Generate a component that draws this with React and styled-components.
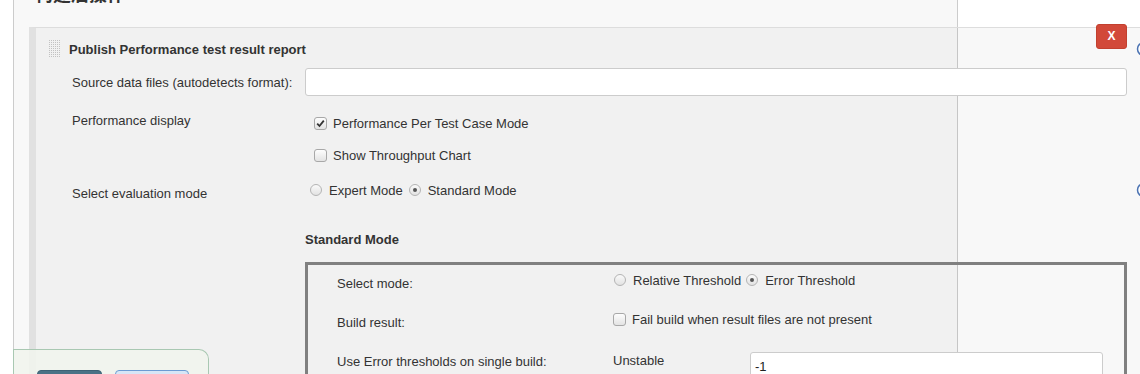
import React from 'react';
import styled, { createGlobalStyle } from 'styled-components';

const GlobalStyle = createGlobalStyle`
  html, body {
    margin: 0;
    padding: 0;
    overflow: hidden;
    background: #fff;
  }
  body {
    font-family: "Liberation Sans", Arial, "Noto Sans CJK SC", sans-serif;
    font-size: 13px;
    color: #333;
  }
`;

const Section = styled.div`
  margin-left: 13px;
  width: 943px;
  min-height: 100vh;
  border-left: 1px solid #ccc;
  border-right: 1px solid #ccc;
  background: #f8f8f8;
`;

const SectionTitle = styled.h2`
  margin: -19px 0 0 21px;
  height: 24px;
  font-family: "Noto Sans CJK SC", sans-serif;
  font-size: 18px;
  line-height: 24px;
  font-weight: bold;
  color: #333;
`;

const Panel = styled.div`
  position: relative;
  margin: 22px 0 0 15px;
  width: 1116px;
  padding-bottom: 40px;
  border-top: 1px solid #ddd;
  border-left: 7px solid #e1e1e1;
  background: rgba(0, 0, 0, 0.027);
`;

const Header = styled.div`
  display: grid;
  grid-template-columns: 1078px 25px;
  align-items: center;
  padding: 12px 0 10px 13px;
`;

const HeaderTitle = styled.div`
  display: flex;
  align-items: center;
  gap: 8px;
  font-weight: bold;
  line-height: 15px;
`;

const DeleteButton = styled.button`
  position: absolute;
  top: -4px;
  left: 1060px;
  width: 31px;
  height: 25px;
  padding: 0;
  border: 1px solid #c2402f;
  border-radius: 3px;
  background: #d24939;
  color: #fff;
  font-family: "Liberation Sans", Arial, sans-serif;
  font-size: 12px;
  font-weight: bold;
  line-height: 23px;
`;

const Row = styled.div`
  display: grid;
  grid-template-columns: 233px 822px 25px;
  align-items: ${p => p.$align || 'start'};
  padding-left: 36px;
  margin-top: ${p => p.$mt || 0}px;
`;

const Label = styled.div`
  padding-top: ${p => p.$offset || 0}px;
  line-height: 15px;
`;

const TextInput = styled.input`
  box-sizing: border-box;
  width: ${p => p.$width || '100%'};
  height: 28px;
  padding: 0 4px;
  border: 1px solid #ccc;
  border-radius: 3px;
  background: #fff;
  font-family: "Liberation Sans", Arial, sans-serif;
  font-size: 13px;
  color: #222;
  outline: none;
`;

const Options = styled.div`
  display: flex;
  flex-direction: column;
  gap: 12px;
`;

const OptionLine = styled.label`
  display: flex;
  align-items: center;
  height: 20px;
  gap: ${p => p.$gap || 0}px;
`;

const Choice = styled.span`
  display: inline-flex;
  align-items: center;
  line-height: 15px;
`;

const CheckBox = styled.span`
  box-sizing: border-box;
  display: inline-flex;
  align-items: center;
  justify-content: center;
  width: 13px;
  height: 13px;
  margin: 0 6px 0 ${p => p.$ml}px;
  border: 1px solid #a8a8a8;
  border-radius: 3px;
  background: linear-gradient(#fdfdfd, #e3e3e3);
`;

const RadioDot = styled.span`
  box-sizing: border-box;
  display: inline-flex;
  align-items: center;
  justify-content: center;
  width: 12px;
  height: 12px;
  margin: 0 7px 0 ${p => p.$ml}px;
  border: 1px solid #b4b4b4;
  border-radius: 50%;
  background: linear-gradient(#fafafa, #e2e2e2);
  &::after {
    content: '';
    display: ${p => (p.$on ? 'block' : 'none')};
    width: 4px;
    height: 4px;
    border-radius: 50%;
    background: #555;
  }
`;

const SubHeading = styled.div`
  grid-column: 2;
  font-weight: bold;
  line-height: 15px;
`;

const ModeBox = styled.div`
  grid-column: 2;
  height: 140px;
  padding: 5px 21px 0 29px;
  border: 3px solid #808080;
`;

const BoxRow = styled.div`
  display: grid;
  grid-template-columns: 276px 1fr;
  align-items: start;
  margin-top: ${p => p.$mt || 0}px;
`;

const ThresholdLine = styled.div`
  display: grid;
  grid-template-columns: 137px 353px;
  align-items: start;
`;

const HelpWrap = styled.span`
  display: inline-flex;
  margin: ${p => p.$mt || 0}px 0 0 9px;
`;

const BottomSticker = styled.div`
  position: fixed;
  left: 13px;
  bottom: 0;
  box-sizing: border-box;
  width: 196px;
  height: 25px;
  overflow: hidden;
  display: flex;
  gap: 13px;
  padding: 20px 0 0 23px;
  border: 1px solid #a9c8b2;
  border-bottom: none;
  border-top-right-radius: 10px;
  background: rgba(240, 244, 237, 0.88);
`;

const StickerButton = styled.button`
  flex: none;
  box-sizing: border-box;
  width: ${p => p.$width}px;
  height: 30px;
  border-radius: 4px;
  border: 1px solid ${p => (p.$primary ? '#3d6275' : '#6c9bd2')};
  background: ${p => (p.$primary ? '#4a7286' : '#d7e6f6')};
`;

const DragHandle = () => {
  const dots = [];
  for (let x = 0; x < 6; x++) {
    for (let y = 0; y < 9; y++) {
      dots.push(<rect key={`${x}-${y}`} x={x * 2} y={y * 2} width="1" height="1" fill="#c2c2c2" />);
    }
  }
  return (
    <svg width="12" height="18" viewBox="0 0 12 18">
      {dots}
    </svg>
  );
};

const HelpIcon = () => (
  <svg width="16" height="16" viewBox="0 0 16 16">
    <circle cx="8" cy="8" r="6.5" fill="#fff" stroke="#4a72b2" strokeWidth="1.5" />
    <path d="M6 6.3a2 2 0 1 1 2.6 1.9c-.5.2-.6.5-.6 1.1" fill="none" stroke="#4a72b2" strokeWidth="1.4" />
    <circle cx="8" cy="11.3" r="0.9" fill="#4a72b2" />
  </svg>
);

const Check = ({ checked, ml, children }) => (
  <OptionLine>
    <CheckBox $ml={ml}>
      {checked && (
        <svg width="9" height="9" viewBox="0 0 9 9">
          <path d="M1.2 4.6 L3.5 7 L7.8 1.6" fill="none" stroke="#333" strokeWidth="1.8" />
        </svg>
      )}
    </CheckBox>
    <Choice>{children}</Choice>
  </OptionLine>
);

const Radios = ({ items, value, ml, gap }) => (
  <OptionLine $gap={gap}>
    {items.map(item => (
      <Choice key={item}>
        <RadioDot $ml={ml} $on={item === value} />
        {item}
      </Choice>
    ))}
  </OptionLine>
);

const App = () => (
  <>
    <GlobalStyle />
    <Section>
      <SectionTitle>构建后操作</SectionTitle>
      <Panel>
        <Header>
          <HeaderTitle>
            <DragHandle />
            Publish Performance test result report
          </HeaderTitle>
          <HelpWrap><HelpIcon /></HelpWrap>
        </Header>
        <DeleteButton>X</DeleteButton>

        <Row $align="center">
          <Label>Source data files (autodetects format):</Label>
          <TextInput defaultValue="" />
        </Row>

        <Row $mt={17}>
          <Label>Performance display</Label>
          <Options>
            <Check checked ml={9}>Performance Per Test Case Mode</Check>
            <Check ml={9}>Show Throughput Chart</Check>
          </Options>
        </Row>

        <Row $mt={15}>
          <Label $offset={6}>Select evaluation mode</Label>
          <Radios items={['Expert Mode', 'Standard Mode']} value="Standard Mode" ml={5} gap={1} />
          <HelpWrap $mt={2}><HelpIcon /></HelpWrap>
        </Row>

        <Row $mt={31}>
          <SubHeading>Standard Mode</SubHeading>
        </Row>

        <Row $mt={15}>
          <ModeBox>
            <BoxRow>
              <Label $offset={5.5}>Select mode:</Label>
              <Radios items={['Relative Threshold', 'Error Threshold']} value="Error Threshold" ml={1} gap={4} />
            </BoxRow>
            <BoxRow $mt={19}>
              <Label $offset={5.5}>Build result:</Label>
              <Check ml={0}>Fail build when result files are not present</Check>
            </BoxRow>
            <BoxRow $mt={22}>
              <Label $offset={1.5}>Use Error thresholds on single build:</Label>
              <ThresholdLine>
                <Label $offset={0.5}>Unstable</Label>
                <TextInput defaultValue="-1" $width="353px" />
              </ThresholdLine>
            </BoxRow>
          </ModeBox>
        </Row>
      </Panel>
    </Section>
    <BottomSticker>
      <StickerButton $primary $width={65} aria-label="保存" />
      <StickerButton $width={74} aria-label="应用" />
    </BottomSticker>
  </>
);

export default App;
